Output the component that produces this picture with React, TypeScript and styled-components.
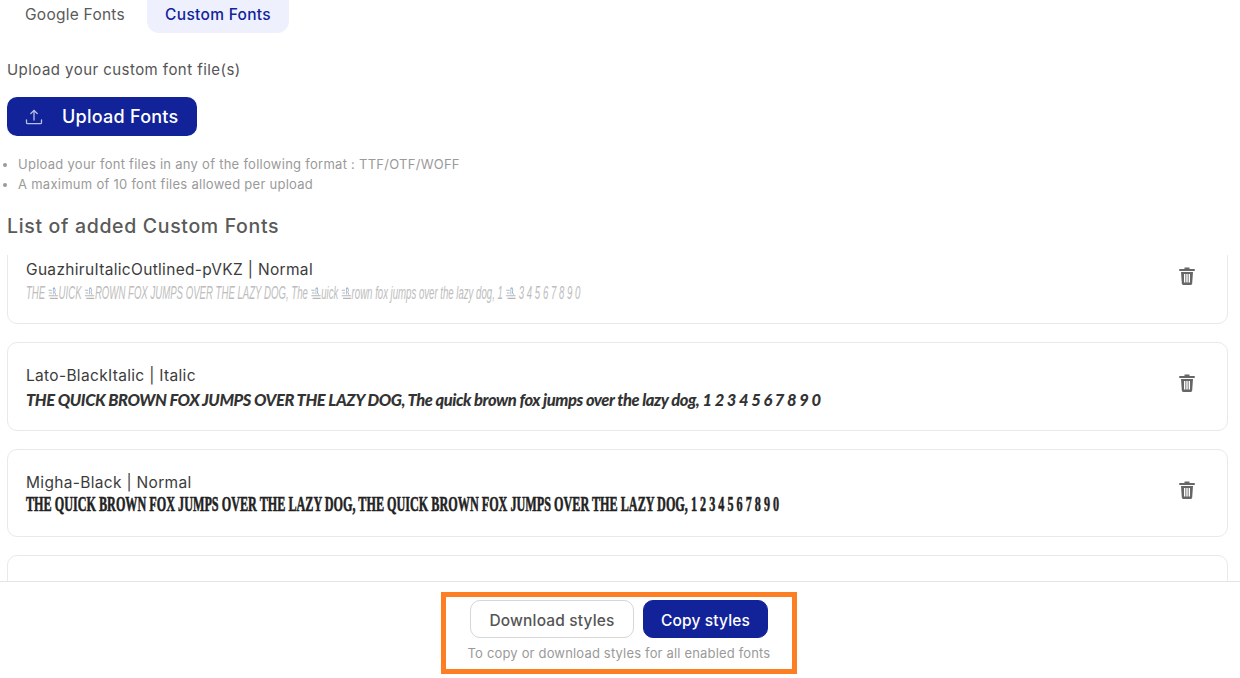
import styled, { createGlobalStyle } from 'styled-components'

const GlobalStyle = createGlobalStyle`
  html, body {
    margin: 0;
    height: 100%;
    overflow: hidden;
    background: #fff;
    font-family: Inter, "Open Sans", sans-serif;
  }
  * {
    box-sizing: border-box;
  }
`

const Page = styled.div`
  display: flex;
  flex-direction: column;
  height: 100vh;
`

const Tabs = styled.div`
  display: flex;
  align-items: flex-end;
  gap: 4px;
  height: 33px;
  flex: none;
  padding-left: 7px;
  overflow: hidden;
`

const Tab = styled.button<{ $active?: boolean }>`
  height: 46px;
  width: ${(p) => (p.$active ? '142px' : '136px')};
  padding: 9px 0 0;
  flex: none;
  border: 0;
  border-radius: 12px;
  font-family: inherit;
  font-size: 15.5px;
  font-weight: ${(p) => (p.$active ? 500 : 400)};
  letter-spacing: ${(p) => (p.$active ? '0.3px' : '0.25px')};
  color: ${(p) => (p.$active ? '#12239a' : '#5a5a5a')};
  background: ${(p) => (p.$active ? '#eef1fd' : 'transparent')};
`

const UploadSection = styled.section`
  flex: none;
  padding: 28px 0 0 7px;
`

const Label = styled.p`
  margin: 0;
  height: 18px;
  line-height: 18px;
  font-size: 15px;
  letter-spacing: 0.45px;
  color: #555;
`

const UploadButton = styled.button`
  display: flex;
  align-items: center;
  gap: 19px;
  width: 190px;
  height: 39px;
  margin-top: 18px;
  padding: 0 0 0 18px;
  border: 0;
  border-radius: 10px;
  background: #12239a;
  color: #fff;
  font-family: inherit;
  font-size: 18px;
  font-weight: 500;
  letter-spacing: 0.25px;
`

const Notes = styled.ul`
  margin: 18px 0 0;
  padding: 0 0 0 11px;
  font-size: 13px;
  line-height: 20px;
  letter-spacing: 0.27px;
  color: #9a9a9a;

  li::marker {
    font-size: 13px;
  }
`

const Heading = styled.h2`
  margin: 20px 0 0;
  height: 24px;
  line-height: 24px;
  font-size: 19.5px;
  font-weight: 500;
  letter-spacing: 0.66px;
  color: #5a5a5a;
`

const ListViewport = styled.div`
  flex: 1;
  min-height: 0;
  margin-top: 17px;
  padding: 0 12px 0 7px;
  overflow: hidden;
`

const List = styled.div`
  display: flex;
  flex-direction: column;
  gap: 18px;
  margin-top: -19.5px;
`

const Card = styled.article`
  position: relative;
  flex: none;
  height: 88.6px;
  padding: 23px 18px 0;
  border: 1px solid #e9e9e9;
  border-radius: 10px;
  background: #fff;

  &:first-child {
    padding-top: 23.5px;
  }
`

const FontName = styled.div`
  height: 20px;
  line-height: 20px;
  font-size: 15.5px;
  letter-spacing: 0.32px;
  color: #3c3c3c;
`

const Specimen = styled.div<{ $font: string; $scale?: number; $offset?: number }>`
  height: 24px;
  line-height: 24px;
  margin-top: ${(p) => p.$offset ?? 2}px;
  white-space: nowrap;
  transform: scaleX(${(p) => p.$scale ?? 1});
  transform-origin: left center;
  ${(p) => p.$font}
`

const TrashButton = styled.button`
  position: absolute;
  top: 31px;
  right: 32px;
  display: flex;
  padding: 0;
  border: 0;
  background: none;

  article:first-child > & {
    top: 30px;
  }
`

const Footer = styled.footer`
  flex: none;
  display: flex;
  justify-content: center;
  height: 97px;
  padding: 10px 2px 0 0;
  border-top: 1px solid #e5e5e5;
  background: #fff;
`

const Highlight = styled.div`
  display: flex;
  flex-direction: column;
  align-items: center;
  width: 356px;
  height: 82px;
  padding-top: 3px;
  border: 5px solid #fd7e23;
`

const Actions = styled.div`
  display: flex;
  gap: 9px;
`

const ActionButton = styled.button<{ $primary?: boolean }>`
  width: ${(p) => (p.$primary ? '125px' : '164px')};
  height: 38px;
  padding: 2px 0 0;
  border: 1px solid ${(p) => (p.$primary ? '#12239a' : '#d6d6d6')};
  border-radius: 10px;
  background: ${(p) => (p.$primary ? '#12239a' : '#fff')};
  color: ${(p) => (p.$primary ? '#fff' : '#555')};
  font-family: inherit;
  font-size: 15.5px;
  font-weight: 500;
  letter-spacing: 0.15px;
`

const Hint = styled.p`
  margin: 6px 0 0;
  line-height: 18px;
  font-size: 13px;
  letter-spacing: 0.17px;
  color: #9a9a9a;
`

const guazhiruFont = `
  font-family: "Liberation Sans", sans-serif;
  font-style: italic;
  font-size: 18px;
  color: #bdbdbd;
`

const latoFont = `
  font-family: Lato, sans-serif;
  font-style: italic;
  font-weight: 900;
  font-size: 16.5px;
  letter-spacing: -0.44px;
  color: #333;
`

const mighaFont = `
  font-family: "Liberation Serif", serif;
  font-weight: 700;
  font-size: 22px;
  color: #222;
  -webkit-text-stroke: 0.6px #222;
`

function UploadIcon() {
  return (
    <svg width="18" height="18" viewBox="0 0 18 18" fill="none" stroke="#b9c0e6" strokeWidth="1.3" strokeLinecap="round" strokeLinejoin="round">
      <path d="M9 2.5V12" />
      <path d="M5.8 5.5 9 2.5l3.2 3" />
      <path d="M1.5 12v2.5a1.2 1.2 0 0 0 1.2 1.2h12.6a1.2 1.2 0 0 0 1.2-1.2V12" />
    </svg>
  )
}

function TrashIcon() {
  return (
    <svg width="16" height="18" viewBox="0 0 16 18" fill="#666">
      <path d="M5.5 0.5h5V2H15a1 1 0 0 1 0 2H1a1 1 0 0 1 0-2h4.5z" />
      <path fillRule="evenodd" d="M2 5h12l-.8 11.2A1.6 1.6 0 0 1 11.6 18H4.4a1.6 1.6 0 0 1-1.6-1.8zM5 7v8.5h1.4V7zm2.3 0v8.5h1.4V7zm2.3 0v8.5H11V7z" />
    </svg>
  )
}

// the broken glyph this font draws for Q, B and 2
function BrokenGlyph() {
  return (
    <svg width="20" height="13" viewBox="0 0 16 12" preserveAspectRatio="none" fill="none" stroke="#b5b5b5" strokeWidth="1" style={{ verticalAlign: '-1px' }}>
      <path d="M1 3h5M2 5.500h4M1 8h14M3 10.500h12" />
      <path d="M8 1v6M8 1h2l1 2-1 2 2 2" stroke="#8ea6c8" />
    </svg>
  )
}

export default function App() {
  return (
    <Page>
      <GlobalStyle />
      <Tabs>
        <Tab>Google Fonts</Tab>
        <Tab $active>Custom Fonts</Tab>
      </Tabs>

      <UploadSection>
        <Label>Upload your custom font file(s)</Label>
        <UploadButton>
          <UploadIcon />
          Upload Fonts
        </UploadButton>
        <Notes>
          <li>Upload your font files in any of the following format : TTF/OTF/WOFF</li>
          <li>A maximum of 10 font files allowed per upload</li>
        </Notes>
        <Heading>List of added Custom Fonts</Heading>
      </UploadSection>

      <ListViewport>
        <List>
          <Card>
            <FontName>GuazhiruItalicOutlined-pVKZ | Normal</FontName>
            <Specimen $font={guazhiruFont} $scale={0.534} $offset={1}>
              THE <BrokenGlyph />UICK <BrokenGlyph />ROWN FOX JUMPS OVER THE LAZY DOG, The <BrokenGlyph />uick <BrokenGlyph />rown fox jumps over the lazy dog, 1 <BrokenGlyph /> 3 4 5 6 7 8 9 0
            </Specimen>
            <TrashButton><TrashIcon /></TrashButton>
          </Card>
          <Card>
            <FontName>Lato-BlackItalic | Italic</FontName>
            <Specimen $font={latoFont}>
              THE QUICK BROWN FOX JUMPS OVER THE LAZY DOG, The quick brown fox jumps over the lazy dog, 1 2 3 4 5 6 7 8 9 0
            </Specimen>
            <TrashButton><TrashIcon /></TrashButton>
          </Card>
          <Card>
            <FontName>Migha-Black | Normal</FontName>
            <Specimen $font={mighaFont} $scale={0.553} $offset={-1}>
              THE QUICK BROWN FOX JUMPS OVER THE LAZY DOG, THE QUICK BROWN FOX JUMPS OVER THE LAZY DOG, 1 2 3 4 5 6 7 8 9 0
            </Specimen>
            <TrashButton><TrashIcon /></TrashButton>
          </Card>
          <Card />
        </List>
      </ListViewport>

      <Footer>
        <Highlight>
          <Actions>
            <ActionButton>Download styles</ActionButton>
            <ActionButton $primary>Copy styles</ActionButton>
          </Actions>
          <Hint>To copy or download styles for all enabled fonts</Hint>
        </Highlight>
      </Footer>
    </Page>
  )
}
